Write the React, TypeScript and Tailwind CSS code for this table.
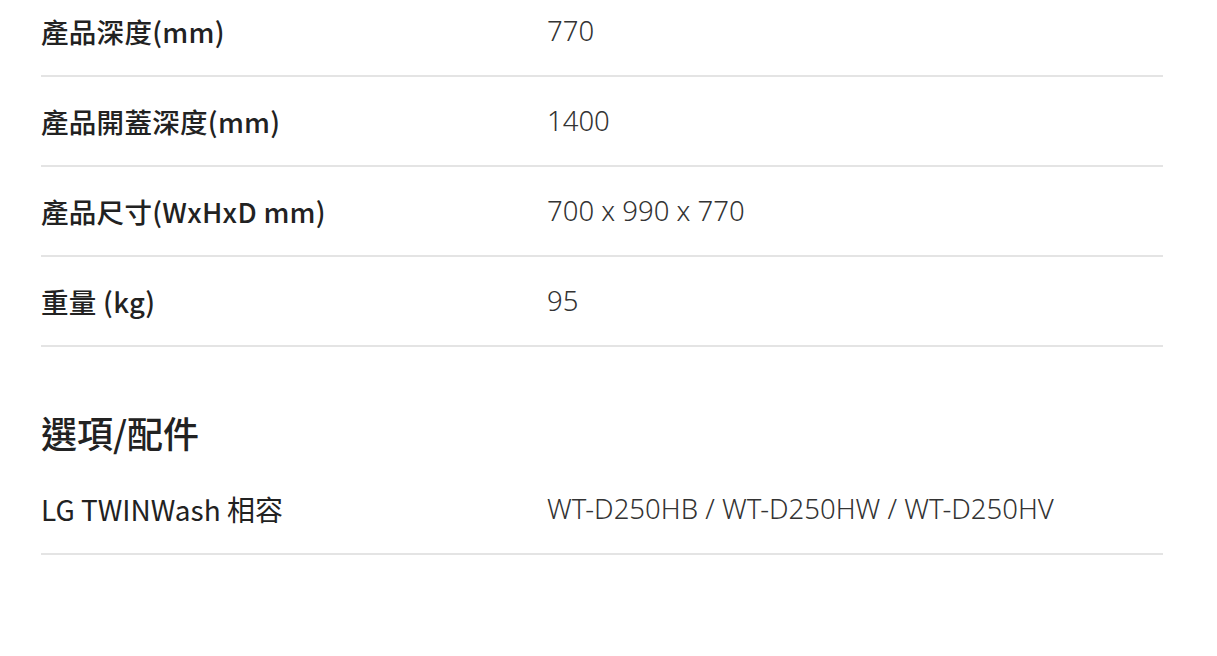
const specs = [
  { label: "產品深度(mm)", value: "770" },
  { label: "產品開蓋深度(mm)", value: "1400" },
  { label: "產品尺寸(WxHxD mm)", value: "700 x 990 x 770" },
  { label: "重量 (kg)", value: "95" },
];

function Row({ label, value, light }: { label: string; value: string; light?: boolean }) {
  return (
    <div className="flex h-[90px] items-center border-b-2 border-[#e4e4e4]">
      <div
        className={`w-[506px] shrink-0 font-['Noto_Sans_CJK_TC',sans-serif] leading-[34px] text-[#222] ${
          light ? "text-[28px] font-normal" : "text-[27.5px] font-medium tracking-[0.3px]"
        }`}
      >
        {label}
      </div>
      <div className="font-['Noto_Sans',sans-serif] text-[27.5px] font-light leading-[36px] text-[#333]">
        {value}
      </div>
    </div>
  );
}

export default function App() {
  return (
    <div className="h-[656px] w-[1217px] overflow-hidden bg-white">
      <div className="-mt-[13px] ml-[41px] w-[1122px]">
        {specs.map((s) => (
          <Row key={s.label} label={s.label} value={s.value} />
        ))}
        <h2 className="pt-[63px] pb-[11px] font-['Noto_Sans_CJK_TC',sans-serif] text-[36px] font-medium leading-[44px] text-[#222]">
          選項/配件
        </h2>
        <Row label="LG TWINWash 相容" value="WT-D250HB / WT-D250HW / WT-D250HV" light />
      </div>
    </div>
  );
}
